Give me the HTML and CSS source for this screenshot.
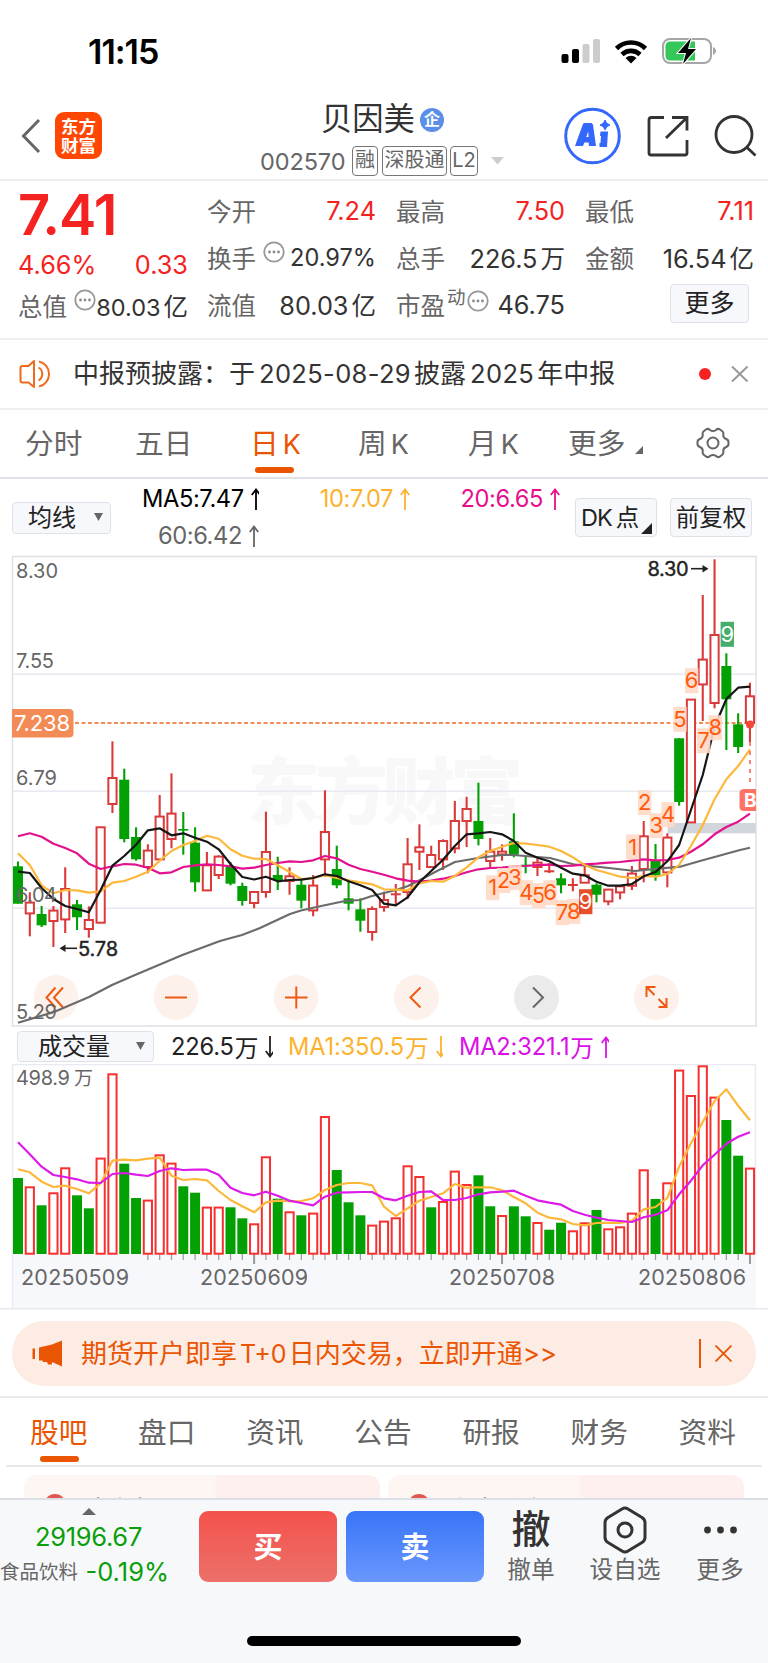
FILE: index.html
```html
<!DOCTYPE html>
<html lang="zh-CN">
<head>
<meta charset="utf-8">
<title>贝因美 002570</title>
<link rel="stylesheet" href="styles.css">
</head>
<body>
<div class="phone">
  <div class="status">
    <span class="clock">11:15</span>
    <svg class="status-icons" width="160" height="30" viewBox="560 36 160 30">
      <rect x="561.500" y="54" width="7" height="9" rx="2"/><rect x="572" y="49" width="7" height="14" rx="2"/>
      <rect x="582.500" y="44" width="7" height="19" rx="2" fill="#ccc"/><rect x="593" y="39" width="7" height="24" rx="2" fill="#ccc"/>
      <g fill="none" stroke="#000" stroke-width="4.600"><path d="M616.500 48.500a20.500 20.500 0 0 1 29 0"/><path d="M622 54.500a13 13 0 0 1 18 0"/></g>
      <path d="M625.500 58a8 8 0 0 1 11 0L631 63.500z"/>
      <rect x="663" y="39" width="48" height="24" rx="7" fill="#fff" stroke="#a6a6a6" stroke-width="2"/>
      <path d="M670 41.500h25v19h-25a4.500 4.500 0 0 1-4.500-4.500v-10a4.500 4.500 0 0 1 4.500-4.500z" fill="#34c759"/>
      <path d="M713 47c4 1.500 4 6.500 0 8z" fill="#a6a6a6"/>
      <path d="M691 38l-13 15h8l-3 11 13-15h-8z" stroke="#fff" stroke-width="2" paint-order="stroke"/>
    </svg>
  </div>

  <header class="nav">
    <svg class="back" width="22" height="38" viewBox="0 0 22 38"><path d="M19 3L3.500 19 19 35"/></svg>
    <div class="logo"><span>东方</span><span>财富</span></div>
    <div class="title">
      <div class="name">贝因美<i class="corp">企</i></div>
      <div class="code"><span class="num">002570</span><b>融</b><b class="t3">深股通</b><b class="t2">L2</b><svg width="14" height="8"><path d="M0 0h13L6.500 7.500z" fill="#ccc"/></svg></div>
    </div>
    <svg class="nav-icons" width="206" height="60" viewBox="562 106 206 60">
      <circle cx="592.500" cy="136" r="26.800" fill="none" stroke="#3467fb" stroke-width="3"/>
      <path d="M584 123h7.500l1.500 1.500 3 21.500h-7l-.4-3.500h-4.200l-1.400 3.500h-8l8-22zM586.300 137h2.300l-.4-5.500z" fill="#3467fb" fill-rule="evenodd"/>
      <path d="M600.500 131.500h7.500l-1 15.500h-7.500v-4h1l.5-7h-1z" fill="#3467fb"/>
      <path d="M605 120l1.700 3.300 3.300 1.700-3.300 1.700-1.700 3.300-1.700-3.300-3.300-1.700 3.300-1.700z" fill="#3467fb" stroke="#3467fb"/>
      <g fill="none" stroke="#333" stroke-width="2.800"><path d="M664 117.500h-12.500q-2.500 0-2.500 2.500v33q0 2 2 2h34q2 0 2-2v-13"/><path d="M672 117.500h15v13M686.500 118l-20.500 20"/><circle cx="734" cy="134.500" r="18"/><path d="M746.500 147l9 8.500"/></g>
    </svg>
  </header>

  <section class="quote">
    <div class="col c1"><div class="big">7.41</div><div class="row red r2"><span>4.66%</span><span>0.33</span></div><div class="row r3"><label>总值</label><svg class="dots" width="22" height="22"><use href="#more"/></svg><span>80.03<em>亿</em></span></div></div>
    <div class="col"><div class="row"><label>今开</label><span class="red">7.24</span></div><div class="row"><label>换手</label><svg class="dots gap" width="22" height="22"><use href="#more"/></svg><span>20.97%</span></div><div class="row"><label>流值</label><span>80.03<em>亿</em></span></div></div>
    <div class="col"><div class="row"><label>最高</label><span class="red">7.50</span></div><div class="row"><label>总手</label><span>226.5<em>万</em></span></div><div class="row"><label>市盈</label><sup>动</sup><svg class="dots pe" width="22" height="22"><use href="#more"/></svg><span>46.75</span></div></div>
    <div class="col"><div class="row"><label>最低</label><span class="red">7.11</span></div><div class="row"><label>金额</label><span>16.54<em>亿</em></span></div><div class="row"><button class="btn more">更多</button></div></div>
  </section>

  <section class="notice">
    <svg width="34" height="30" viewBox="0 0 34 30"><g fill="none" stroke="#f06a1d" stroke-width="2" stroke-linejoin="round"><path d="M15 2v26l-5.500-4.500H3.500Q1.500 23.500 1.500 21.500V9Q1.500 7 3.500 7h6z"/><path d="M19.500 8.500a7.500 7.500 0 0 1 0 13M20 2.500a12.800 12.800 0 0 1 0 25"/></g></svg>
    <p>中报预披露：于<span class="gapn">2025-08-29</span>披露<span class="gapn">2025</span>年中报</p>
    <i class="reddot"></i>
    <svg class="x" width="18" height="16"><path d="M1 .5l15.500 15M16.500 .5L1 15.500" stroke="#999" stroke-width="2"/></svg>
  </section>

  <nav class="ktabs">
    <span>分时</span><span>五日</span><span class="on">日<u>K</u></span><span>周<u>K</u></span><span>月<u>K</u></span><span>更多<svg class="tri" width="8" height="8"><path d="M8 0v8H0z" fill="#666"/></svg></span>
    <svg class="gear" width="34" height="32" viewBox="0 0 34 32"><g fill="none" stroke="#666" stroke-width="2" stroke-linejoin="round"><path d="M10 2.500Q12 1 14 3q3 2.200 6 0 2-2 4-.5l2 1.500q2 1.500 1.200 4 0 3 3 4 2.500 1 2.300 3.500v1q.2 2.500-2.300 3.500-3 1-3 4 .8 2.500-1.200 4l-2 1.500q-2 1.500-4-.5-3-2.200-6 0-2 2-4 .5l-2-1.500q-2-1.500-1.200-4 0-3-3-4Q1.300 19 1.500 16.500v-1Q1.300 13 3.800 12q3-1 3-4Q6 5.500 8 4z"/><circle cx="17" cy="16" r="5.500"/></g></svg>
  </nav>

  <section class="mabar">
    <button class="btn sel">均线<svg width="9" height="8"><path d="M0 0h9L4.500 8z" fill="#666"/></svg></button>
    <div class="mas">
      <div class="ma m5">MA5:7.47<svg width="10" height="22"><use href="#up"/></svg></div><div class="ma m10">10:7.07<svg width="10" height="22"><use href="#up"/></svg></div><div class="ma m20">20:6.65<svg width="10" height="22"><use href="#up"/></svg></div>
      <div class="ma m60">60:6.42<svg width="10" height="22"><use href="#up"/></svg></div>
    </div>
    <button class="btn dk">DK<em>点</em><svg width="11" height="11"><path d="M11 0v11H0z" fill="#222"/></svg></button>
    <button class="btn fq">前复权</button>
  </section>

  <svg class="kchart" id="kchart" width="768" height="474" viewBox="0 555 768 474">
    <text class="watermark" x="247" y="818" textLength="276">东方财富</text>
    <g class="grid"><path d="M12 674.200H756M12 791.200H756M12 908.200H756"/><rect x="12.500" y="556.500" width="743.500" height="469.500"/></g>
    <rect x="667.700" y="823" width="88" height="10.300" fill="#d1d5dc"/>
    <g class="rounds"><circle cx="56" cy="997.500" r="22.500"/><circle cx="176" cy="997.500" r="22.500"/><circle cx="296" cy="997.500" r="22.500"/><circle cx="416.500" cy="997.500" r="22.500"/><circle class="g" cx="536.500" cy="997.500" r="22.500"/><circle cx="656.500" cy="997.500" r="22.500"/></g>
    <g class="roundicons"><path d="M55.500 987.500l-9 10 9 10M63 987.500l-9 10 9 10M165 997.500h22M285 997.500h22.500M296.300 986.500v22M420.500 987.500l-10 10 10 10"/><path d="M533 987.500l10 10-10 10" stroke="#666"/><path d="M646.500 997v-10h9M646.500 987l8 8M658.500 1007h8v-9M666.500 1007l-8-8"/></g>
    <path d="M75 723H745" stroke="#f38b56" stroke-width="1.800" stroke-dasharray="4 2.500"/>
    <g id="candles"></g>
    <g id="lines"></g>
    <g class="axis"><text x="16" y="578" textLength="42">8.30</text><text x="16" y="668" textLength="38">7.55</text><text x="16" y="785" textLength="41">6.79</text><text x="16" y="902" textLength="41">6.04</text><text x="16" y="1019" textLength="41">5.29</text></g>
    <g id="labels"></g>
    <path d="M12 709h57q4.500 0 4.500 4v20.500q0 4-4.500 4H12z" fill="#f38b56"/><text class="tag" x="14" y="731" textLength="56">7.238</text>
    <circle cx="750" cy="724.500" r="4" fill="#f5483b"/><path d="M750 742v45" stroke="#ff7364" stroke-width="1.800" stroke-dasharray="4 5"/>
    <path d="M756 789h-12q-4.500 0-4.500 4.500v13q0 4.500 4.500 4.500h12z" fill="#ff7364"/><text class="bmark" x="744" y="807">B</text>
    <g class="mark"><text x="647.500" y="576" textLength="41">8.30</text><path d="M691 568.700h14"/><path class="hd" d="M708.500 568.700l-6-3.700v7.400z"/><text x="78" y="955.500" textLength="40">5.78</text><path d="M63 948.300h14"/><path class="hd" d="M59.500 948.300l6-3.700v7.400z"/></g>
  </svg>

  <section class="volbar">
    <button class="btn sel">成交量<svg width="9" height="8"><path d="M0 0h9L4.500 8z" fill="#666"/></svg></button>
    <div class="ma v0">226.5<em>万</em><svg width="10" height="22"><use href="#down"/></svg></div>
    <div class="ma v1">MA1:350.5<em>万</em><svg width="10" height="22"><use href="#down"/></svg></div>
    <div class="ma v2">MA2:321.1<em>万</em><svg width="10" height="22"><use href="#up"/></svg></div>
  </section>

  <svg class="vchart" width="768" height="246" viewBox="0 1064 768 246">
    <rect x="12" y="1254" width="744" height="54" fill="#f7f8fb"/>
    <path d="M12.500 1308V1064.500H755.500V1254" class="frame"/>
    <path d="M0 1308.700H768" class="frame"/>
    <g id="ticks"></g>
    <g id="vols"></g>
    <g id="vlines"></g>
    <g class="axis"><text x="16" y="1085" textLength="54">498.9</text><text class="cjk" x="74" y="1085">万</text>
    <g class="dates"><text x="21" y="1285" textLength="108">20250509</text><text x="200" y="1285" textLength="108">20250609</text><text x="449" y="1285" textLength="106">20250708</text><text x="638" y="1285" textLength="108">20250806</text></g></g>
  </svg>

  <div class="adwrap"><div class="ad">
    <svg width="32" height="27" viewBox="0 0 32 27"><path d="M30 .5v26l-10-4.500v2.500h-4l-1-2.500h-3l-1 0-.5-1.500H7V7.500L20 4.500zM.5 8.500H3v10.500H.5z" fill="#ea5504"/></svg>
    <span>期货开户即享<i>T+0</i>日内交易，立即开通&gt;&gt;</span>
    <b></b>
    <svg width="17" height="17"><path d="M.5.5l16 16M16.500.5l-16 16" stroke="#ea5504" stroke-width="1.800"/></svg>
  </div></div>

  <nav class="itabs"><span class="on">股吧</span><span>盘口</span><span>资讯</span><span>公告</span><span>研报</span><span>财务</span><span>资料</span></nav>

  <div class="cards">
    <div class="card a"><i></i><span>大有机</span></div><div class="card b"><i></i><span>主力看点</span></div>
  </div>

  <footer class="bottom">
    <div class="idx"><svg width="14" height="7"><path d="M0 7h14L7 0z" fill="#666"/></svg><div class="pt">29196.67</div><div class="chg"><span>食品饮料</span><b>-0.19%</b></div></div>
    <div class="trade buy">买</div><div class="trade sell">卖</div>
    <div class="act a1"><strong>撤</strong><span>撤单</span></div>
    <div class="act a2"><svg width="44" height="48" viewBox="0 0 44 48"><g fill="none" stroke="#333" stroke-width="3"><path d="M19 3q3-2 6 0l14 8.500q3 2 3 5v15q0 3-3 5L25 45q-3 2-6 0L5 36.500q-3-2-3-5v-15q0-3 3-5z"/><circle cx="22" cy="24" r="7"/></g></svg><span>设自选</span></div>
    <div class="act a3"><svg width="44" height="48" viewBox="0 0 44 48"><g fill="#333"><circle cx="9.500" cy="24" r="3.400"/><circle cx="22.500" cy="24" r="3.400"/><circle cx="35.500" cy="24" r="3.400"/></g></svg><span>更多</span></div>
    <div class="home"></div>
  </footer>
</div>
<svg class="defs" width="0" height="0"><defs>
  <g id="more"><circle cx="11" cy="11" r="9.700" fill="none" stroke="#999" stroke-width="1.800"/><circle cx="6.500" cy="11" r="1.400" fill="#888"/><circle cx="11" cy="11" r="1.400" fill="#888"/><circle cx="15.500" cy="11" r="1.400" fill="#888"/></g>
  <g id="up" fill="none" stroke="currentColor" stroke-width="1.800"><path d="M5 22V1.500M.8 7L5 1.500 9.200 7"/></g>
  <g id="down" fill="none" stroke="currentColor" stroke-width="1.800"><path d="M5 0v20.500M.8 15L5 20.500 9.200 15"/></g>
</defs></svg>
<script src="chart.js"></script>
</body>
</html>
```
FILE: styles.css
```css
* { box-sizing: border-box; }
body { margin: 0; background: #fff; color: #333; font-family: Inter, "Noto Sans CJK SC", sans-serif; font-weight: 400; }
.phone { width: 768px; height: 1663px; overflow: hidden; display: flex; flex-direction: column; }
.phone > * { flex: none; }
.defs { position: absolute; }
em, i, u { font-style: normal; text-decoration: none; }
button { font: inherit; padding: 0; color: #222; }
.red { color: #f52222; }
.btn { background: #f7f8fb; border: 1.5px solid #dfe1e8; border-radius: 4px; white-space: nowrap; }

.status { height: 100px; padding: 36px 48px 0 88px; display: flex; justify-content: space-between; }
.clock { font-size: 34px; font-weight: 600; line-height: 31px; color: #000; letter-spacing: -1px; }

.nav { height: 81px; border-bottom: 2px solid #eee; display: flex; align-items: flex-start; }
.back { margin: 17px 0 0 20px; fill: none; stroke: #666; stroke-width: 3; }
.logo { margin: 12px 0 0 13px; width: 47px; height: 47px; border-radius: 9px; background: #ff4602; color: #fff; font-size: 17.500px; font-weight: 700; line-height: 19px; display: flex; flex-direction: column; align-items: center; justify-content: center; }
.title { margin-left: 158px; width: 302px; }
.name { padding-left: 61px; font-size: 31.300px; line-height: 39px; display: flex; align-items: center; color: #333; }
.corp { margin-left: 5px; width: 24px; height: 24px; border-radius: 50%; background: #5b8ee8; color: #fff; font-size: 16px; font-weight: 700; line-height: 23px; text-align: center; }
.code { display: flex; align-items: center; margin-top: 6px; height: 32px; color: #666; }
.code .num { font-size: 23.500px; width: 92px; letter-spacing: -.1px; }
.code b { font-weight: 400; border: 1.500px solid #777; border-radius: 4px; height: 30px; width: 26px; line-height: 26px; text-align: center; font-size: 20px; margin-right: 4px; white-space: nowrap; }
.code .t3 { width: 65px; margin-right: 3px; }
.code .t2 { width: 28px; margin-right: 13px; }
.nav-icons { margin-top: 6px; }

.quote { height: 159px; border-bottom: 2px solid #eee; display: grid; grid-template-columns: 170px 169px 169px 169px; column-gap: 20px; padding: 6px 0 0 18px; }
.quote .col + .col { margin-left: -1px; margin-right: 1px; }
.row { height: 47px; display: flex; align-items: center; font-size: 24.500px; white-space: nowrap; }
.row > span { margin-left: auto; font-size: 25.300px; }
.row.r2 > span:first-child { margin-left: 0; }
.row label, .row sup { color: #666; }
.row em { margin-left: 3px; font-size: 24.500px; }
.row sup { font-size: 18.500px; line-height: 20px; margin: -16px 0 0 2px; }
.big { font-size: 56px; font-weight: 600; line-height: 56px; height: 59px; color: #f52222; letter-spacing: -1px; }
.dots { margin: -11px 0 0 7px; }
.c1 .dots { margin-right: -12px; }
.r2 { height: 37px; }
.r3 { height: 45px; }
.row.r3 > span { font-size: 23.500px; }
.row > .gap + span { font-size: 23.600px; }
.row .pe { margin-left: 1px; margin-top: -8px; }
.row .pe + span { margin-right: 0; }
.more { width: 79px; height: 39px; margin: -3px 0 0 85px; font-size: 25px; line-height: 34px; }

.notice { height: 69.500px; border-bottom: 2.500px solid #eee; display: flex; align-items: center; padding: 0 19px; }
.notice p { margin: -4px 0 0 20px; width: 626px; font-size: 26px; white-space: nowrap; color: #333; }
.gapn { margin: 0 3px 0 4px; letter-spacing: .35px; font-size: 25.500px; }
.reddot { width: 12px; height: 12px; border-radius: 50%; background: #f52222; margin-right: 20px; }

.ktabs { height: 69.500px; border-bottom: 2px solid #dfe0e8; display: flex; align-items: center; padding-left: 25px; color: #666; font-size: 28.700px; }
.ktabs span { width: 110px; position: relative; top: -2px; white-space: nowrap; }
.ktabs span:nth-child(2) { width: 115px; }
.ktabs span:nth-child(3) { width: 108px; }
.ktabs span:nth-child(5) { width: 100px; }
.ktabs span:nth-child(6) { width: 128px; }
.ktabs u { margin-left: 4px; font-size: 27px; }
.ktabs .on { color: #ea5504; }
.ktabs .on::after, .itabs .on::after { content: ""; position: absolute; left: 5px; bottom: -11px; width: 39px; height: 6px; border-radius: 3px; background: #ea5504; }
.tri { margin-left: 10px; }

.mabar { height: 76px; padding: 0 16px 0 12px; display: flex; align-items: flex-start; }
.mabar .sel { margin-top: 23px; width: 99px; height: 32px; font-size: 24px; line-height: 28px; padding-left: 8px; }
.sel svg { margin: 0 0 5px 18px; }
.mas { display: grid; grid-template-columns: 117px 151px 150px; padding: 1px 0 0 31px; width: 464px; }
.ma { display: flex; align-items: center; justify-content: flex-end; gap: 7px; height: 37px; font-size: 23.700px; letter-spacing: -.4px; white-space: nowrap; }
.m5 { color: #000; } .m10 { color: #fbb32f; } .m20 { color: #e6108c; } .m60 { color: #666; }
.dk, .fq { margin-top: 19px; height: 39px; width: 82px; font-size: 23.500px; line-height: 34px; }
.dk { display: flex; align-items: center; padding-left: 5px; margin-right: 13px; letter-spacing: -1px; }
.dk em { margin-left: 4px; }
.dk svg { margin: 22px 0 0 3px; }

svg { display: block; }
.sel svg, .tri, .notice svg { display: inline-block; }
.grid path, .frame { stroke: #e8eaf1; stroke-width: 1.500; fill: none; }
.grid rect { fill: none; stroke: #dfe0e6; stroke-width: 1.500; }
.watermark { font-size: 73px; font-weight: 900; fill: #f8f8f8; }
.axis text { font-size: 20px; fill: #666; }
.axis .dates text { font-size: 21.500px; }
.axis .cjk { font-size: 19px; }
.rounds circle { fill: #fdf1eb; } .rounds .g { fill: #ebebeb; }
.roundicons { fill: none; stroke: #ee5a13; stroke-width: 2; }
.tag { fill: #fff; font-size: 22px; }
.bmark { fill: #fff; font-size: 19px; font-weight: 700; }
.mark text { font-size: 20px; fill: #222; stroke: #222; stroke-width: .4; }
.mark path { stroke: #222; stroke-width: 1.600; } .mark .hd { fill: #222; stroke: none; }
.td rect { fill: #ffd9c6; fill-opacity: .9; } .td text { font-size: 22px; text-anchor: middle; fill: #ff5a0c; }
.td.hot rect { fill: #e23c13; } .td.cool rect { fill: #32a45b; } .td.hot text, .td.cool text { fill: #fff; }

.volbar { height: 35px; display: flex; align-items: center; padding-left: 17px; }
.volbar .sel { width: 137px; height: 31px; font-size: 24px; line-height: 27px; padding-left: 12px; }
.volbar .sel svg { margin-left: 26px; }
.v0 { color: #222; width: 102px; margin-left: 17px; } .v1 { color: #fbb32f; width: 155px; margin-left: 15px; } .v2 { color: #d911e6; width: 150px; margin-left: 16px; }
.ma em { margin-left: -6px; letter-spacing: 0; }
.volbar .ma { height: 30px; letter-spacing: -.2px; }

.adwrap { height: 88px; padding: 11px 12px 0; border-bottom: 2px solid #eaeaea; }
.ad { height: 65px; border-radius: 32px; background: #fcece4; color: #ea5504; display: flex; align-items: center; padding-left: 20px; font-size: 26px; white-space: nowrap; }
.ad span { margin: -4px 0 0 17px; width: 618px; }
.ad i { margin: 0 2px 0 3px; font-size: 25px; }
.ad b { width: 1.500px; height: 29px; background: #ea5504; margin-right: 14px; }

.itabs { height: 69px; margin: 0 6px; border-bottom: 2px solid #e8e8e8; display: flex; justify-content: space-between; align-items: center; padding: 0 26px 0 24px; color: #666; font-size: 28.700px; }
.itabs span { position: relative; top: -1px; }
.itabs .on { color: #ea5504; }
.itabs .on::after { left: 10px; bottom: -11px; }

.cards { height: 31px; overflow: hidden; display: flex; gap: 8px; padding: 8px 24px 0; }
.card { flex: 1; height: 70px; border-radius: 12px; background: linear-gradient(90deg, #fef6f3 53%, #fdf0ee 55%); display: flex; padding: 19px 0 0 20px; }
.card i { width: 22px; height: 22px; border-radius: 50%; background: #e05650; }
.card span { margin-left: 20px; font-size: 24px; line-height: 32px; }

.bottom { height: 165px; border-top: 2px solid #dcdfe5; background: #f7f8fa; display: grid; grid-template-columns: 199px 138px 138px 70px 72px 70px; column-gap: 0; grid-template-rows: 136px 10px; align-items: start; }
.idx { display: flex; flex-direction: column; align-items: center; padding: 8px 22px 0 0; color: #0a9f0a; white-space: nowrap; }
.pt { font-size: 25.500px; letter-spacing: -.3px; line-height: 30px; margin-top: 7px; }
.chg { display: flex; align-items: center; margin: 4px -22px 0 0; padding-right: 30px; width: 199px; line-height: 32px; }
.chg span { font-size: 19.500px; color: #666; width: 86px; } .chg b { font-weight: 400; font-size: 25.500px; }
.trade { margin-top: 11px; height: 71px; border-radius: 9px; color: #fff; text-align: center; font-size: 29px; font-weight: 700; line-height: 73px; }
.buy { background: linear-gradient(#f4524c, #ec706a); } .sell { background: linear-gradient(#3875f8, #6a97fd); margin-left: 9px; margin-right: -9px; }
.act { display: flex; flex-direction: column; align-items: center; padding-top: 6px; font-size: 23.700px; color: #666; white-space: nowrap; }
.act span { line-height: 32px; }
.act strong { height: 48px; font-size: 39px; line-height: 46px; color: #333; font-weight: 500; }
.a1 { margin-left: 21px; margin-right: -21px; } .a2 { margin-left: 44px; margin-right: -44px; } .a3 { margin-left: 68px; margin-right: -68px; }
.home { grid-row: 2; grid-column: 1 / -1; margin-left: 247px; width: 274px; height: 10px; border-radius: 5px; background: #000; }
```
FILE: chart.js
```js
const X = i => 18 + i * 11.806;
const RED = '#d93a3a', GREEN = '#03a003';

// direction, high, body top, body bottom, low
const candles = `G861.5,866.3,903.7,903.7 R892.3,902.3,913.7,936.3 G906,914,925.3,927 R906,910.3,921.3,947 R867.3,888.7,919.7,933 G900,904.3,917.3,930 R906.3,919.7,929.3,937.7 R827,827,923,923 R741.3,777.7,804.3,813 G768.7,779.7,839,842.3 G827.3,837,859.3,860.7 R844.3,850.3,867.3,873.3 R795,816.3,859.7,859.7 R773.3,813.3,839.3,848.3 G812,829,830.5,854.7 G827.3,842.7,882.3,891.7 R852,865,890.7,890.7 R855.3,856.3,875.3,879 G862,867,883.7,885.3 G882.7,886,901,905.7 R891.7,891.7,903.3,908.3 R811.7,851.7,892.3,897.7 G856.7,875,880,890 R867.3,876,881.3,894.7 G879.3,884.7,900.7,908.3 R875,885.3,910.7,916.3 R790.3,831.7,859.7,876.7 G845.7,869,885.3,888.3 G881.3,898.3,903.7,910.3 G898.3,909.3,920.7,931.7 R906.3,908.7,932.3,940.7 R891.7,899.7,907.3,911.7 R884,893.3,895.3,905.7 R838,864,892.3,899 R824.3,847,852,870 R845.7,854.7,867.3,868 R839.3,840.7,859.7,870 R801,820.7,848.7,853.3 R796.7,808.7,821.3,847 G782.7,821,839,845.3 R838,851.3,861.3,867.3 R844.3,851.3,854.7,860.7 G813.3,841.3,854.7,857.3 G856,864.7,866,873.3 R858.3,862.3,867.3,876 R863,870.3,872.3,873 G873.3,878.3,885.3,893.3 R878.3,884,886,891.3 R865,875,883,883 G883.3,884.7,894.7,902.3 R889.3,889.3,901.7,905.3 R885,886,892.7,899.3 R866,873.3,886,890 R821,836,869.3,882.3 G844,860.7,875.3,880.7 R833.3,837.3,872.7,887.3 G738.3,738.3,802,805.7 R699.3,699.3,822.7,822.7 R595,659.3,684.7,721 R559.3,634.7,703.3,708.3 G653.3,666,699.3,750 G713.3,724.3,747,753 R682.7,696,723.3,742.3`.split(' ').map(s => [s[0], ...s.slice(1).split(',').map(Number)]);

const volume = [1178,1187,1205.3,1193,1168,1195.3,1208.3,1158.3,1074,1163.7,1198,1200.3,1155,1163.3,1186.3,1192.7,1207.3,1207.3,1207.3,1218.3,1224,1157,1198.7,1212,1215.3,1213.3,1116.7,1170,1202.3,1215.3,1225.3,1221.3,1218,1166,1176.7,1207.3,1201.7,1171.3,1184.7,1175.3,1206.3,1215.7,1206.3,1216.3,1222.7,1229.7,1222.7,1231,1223,1210,1229,1227,1213.3,1170,1199,1183,1070.3,1095.7,1066,1097.3,1120,1155.7,1168.3];
// days whose volume bar is drawn solid green
const volDown = new Set([0,2,5,6,9,10,14,15,18,19,22,24,27,28,29,35,39,40,42,43,45,46,49,54,60,61]);

const ma5 = [871.7,873,888,899,906,909,912.3,890,865.7,856,844.7,830.3,828.3,835.3,833.3,837.7,841.7,849.3,864,877,879.5,876.7,881.3,880,879.7,878,874.3,876,881.3,885.3,890,903.7,905.3,897.3,882.3,871,859.7,846,834.3,833.3,832,834.3,841,852.7,857.7,861.3,867.7,873.7,875.3,881.7,885.7,885.7,884,876.3,872,861.3,845,810,775,727,699,687.7,686.7];
const ma10 = [853.3,865,885.3,893.3,890,890.3,892.7,891.3,882.7,881,876.7,871.7,860.7,851,845,841,835.7,838.7,849.3,855.7,858.7,859,865.3,872,879,878.3,875.3,878,880.3,882.3,884.3,889.3,889.7,890.3,883.3,881,881.7,876,867.3,857.3,851,846.7,843,843.7,845,846.7,851,857.3,865,870,873.3,876.7,878,876,876.7,874,865,846,825,799.3,779.3,766,749.3];
const ma20 = [836.3,833.3,836.7,843.7,848,853.3,863.7,869,866.3,864,864.7,867.7,873.3,872.3,867,865.3,864.3,865,866.3,868.7,867.7,865,863,861.3,862,860.3,856,858.3,864.7,869,871.7,874.7,878.3,880.7,881.7,880.7,878.7,876,872.3,869.3,868,867.7,866.3,866,865,864.7,866,865.7,864.3,863.7,862.7,862,860.7,859.3,860.3,860,857.7,851.7,844.3,834.3,827,821.7,813.7];
const ma60 = '18,1022.7 54,1012 89,997 112,985 135,975 183,954.7 220,941 242,935 260,928 290,914 301,910.5 320,906.3 345,901 360,900 372,896 396,890 408,886 420,880 437,871 455,862 478,858 490,856.5 502,855 514,855 525,856 550,858 575,864.7 600,867 635,871 650,869.5 680,866.7 700,861 720,855.5 740,850 750,847.7';
const vma1 = [1169.3,1172.3,1181.7,1187,1185.7,1189,1193.3,1183.3,1160.7,1159.7,1160.3,1158.7,1157.7,1175.7,1180,1179,1180.3,1191,1200,1206.3,1212.3,1202.3,1200.7,1201.3,1201,1198.3,1190,1185,1183,1183,1185.3,1206.7,1216,1208.3,1200.7,1197,1193.3,1184,1187.7,1187.3,1187.3,1190.3,1197,1203.3,1212.7,1217.7,1219.3,1224,1225.3,1223,1222.7,1223,1220.7,1209.3,1207,1198,1166.7,1143.3,1122,1101,1089.3,1105.7,1120.3];
const vma2 = [1142.3,1154.3,1166.7,1175,1177,1179.3,1182.7,1183,1174,1173,1174.7,1176,1171,1168.3,1170,1169.7,1169.7,1174.7,1187.7,1193,1195.3,1191.7,1195.7,1200.7,1203,1205.3,1196.7,1192.7,1192.3,1192,1192,1198.3,1200.3,1195.7,1192,1191.3,1200,1200,1198,1194.3,1192.3,1191.7,1190.7,1195.7,1200.3,1202.7,1204.7,1211,1214.7,1217.7,1220,1221,1222,1217.3,1214.7,1210.3,1194.3,1180.7,1165.3,1154.7,1143.7,1136.7,1132.3];

const line = (pts, color, w = 2.2) =>
  `<polyline points="${Array.isArray(pts) ? pts.map((y, i) => X(i) + ',' + y).join(' ') : pts}" fill="none" stroke="${color}" stroke-width="${w}" stroke-linejoin="round"/>`;
const set = (id, html) => { document.getElementById(id).innerHTML = html; };

const bar = (x, top, bottom, up, color) => {
  const left = Math.max(x - 5, 12.8), right = x + 5;
  if (!up || bottom - top < 3) return `<rect x="${left}" y="${top}" width="${right - left}" height="${Math.max(bottom - top, 1.6)}" fill="${color}"/>`;
  return `<rect x="${x - 4.1}" y="${top + .3}" width="8.2" height="${bottom - top - .6}" fill="#fff" stroke="${color}" stroke-width="2"/>`;
};

set('candles', candles.map(([d, h, t, b, l], i) => {
  const c = d === 'R' ? RED : GREEN, x = X(i);
  return `<path d="M${x} ${h}V${l}" stroke="${c}" stroke-width="2.1"/>` + bar(x, t, b, d === 'R', c);
}).join(''));
set('lines', line(ma60, '#6b6b6b') + line(ma20, '#e3118d') + line(ma10, '#fdb83a') + line(ma5, '#161616'));

set('vols', volume.map((t, i) => bar(X(i), t, 1254, !volDown.has(i), volDown.has(i) ? GREEN : '#f5302f')).join(''));
set('vlines', line(vma1, '#fdb83a') + line(vma2, '#dd1ae8'));

let ticks = '';
for (let i = 11; i < 63; i++) {
  const major = i === 20 || i === 41 || i === 62;
  ticks += `<path d="M${X(i)} 1254v${major ? 10 : 6}" stroke="#999" stroke-width="${major ? 2 : 1.2}"/>`;
}
set('ticks', ticks);

const td = [[1,492.7,887.7],[2,503.7,880.5],[3,515,877.7],[4,526.3,892.7],[5,538.7,895.7],[6,550,892.7],[7,562.3,912.7],[8,573.7,911.3],[9,585.7,901.7,'hot'],[1,632.7,847],[2,644.7,802.7],[3,656.3,825.7],[4,668,814.7],[5,680,719.3],[6,691.7,680.7],[7,703.7,740.7],[8,715.3,727.7],[9,727.3,634.3,'cool']];
set('labels', td.map(([n, x, y, k]) => `<g class="td ${k || ''}"><rect x="${x - 6.7}" y="${y - 12.5}" width="13.4" height="25"/><text x="${x}" y="${y + 7.5}">${n}</text></g>`).join(''));
```
